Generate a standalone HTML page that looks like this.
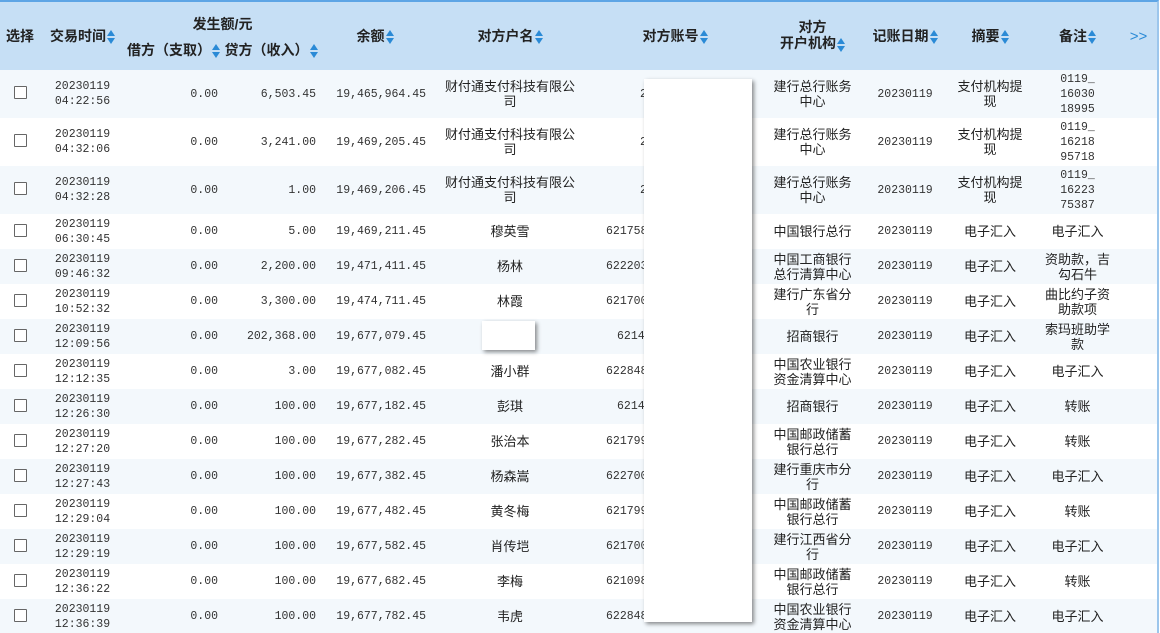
<!DOCTYPE html>
<html><head><meta charset="utf-8">
<style>
html,body{margin:0;padding:0;width:1160px;height:633px;overflow:hidden;background:#fff;}
body{font-family:"Liberation Sans","Noto Sans CJK SC",sans-serif;color:#222;position:relative;}
.wrap{position:absolute;left:0;top:0;width:1159px;height:633px;border-right:2px solid #9cc6ec;border-top:2px solid #5ea5e5;box-sizing:border-box;overflow:hidden;}
table{border-collapse:collapse;table-layout:fixed;width:1157px;}
td,th{padding:0;text-align:center;vertical-align:middle;overflow:hidden;white-space:nowrap;}
thead th{background:#c6dff5;font-weight:bold;font-size:14px;color:#222;}
.s{display:inline-block;width:8px;height:16px;vertical-align:middle;position:relative;margin-left:1px;}
.s:before{content:"";position:absolute;left:0;top:1px;border-left:4px solid transparent;border-right:4px solid transparent;border-bottom:6px solid #2a8ad6;}
.s:after{content:"";position:absolute;left:0;top:9px;border-left:4px solid transparent;border-right:4px solid transparent;border-top:6px solid #2a8ad6;}
tbody td{font-size:13px;line-height:15px;}
.n{font-family:"Liberation Mono","Noto Serif CJK SC",monospace;font-size:11.5px;color:#333;}
.r{text-align:right;padding-right:4px;}
.l{text-align:left;padding-left:16px;}
tbody tr:nth-child(odd) td{background:#f3f8fc;}
tr.t td{height:48px;}
tr.u td{height:35px;}
.cb{display:inline-block;width:11px;height:11px;border:1px solid #666;background:#fff;border-radius:1px;}
.box{position:absolute;background:#fff;box-shadow:2px 2px 4px rgba(0,0,0,.45);}
</style></head><body>
<div class="wrap">
<table>
<colgroup>
<col style="width:40px"><col style="width:85px"><col style="width:97px"><col style="width:98px"><col style="width:110px"><col style="width:160px"><col style="width:170px"><col style="width:105px"><col style="width:80px"><col style="width:90px"><col style="width:85px"><col style="width:37px">
</colgroup>
<thead>
<tr style="height:34px"><th rowspan="2" style="height:68px">选择</th><th rowspan="2">交易时间<span class="s"></span></th><th colspan="2" style="vertical-align:bottom;padding-bottom:2px">发生额/元</th><th rowspan="2">余额<span class="s"></span></th><th rowspan="2">对方户名<span class="s"></span></th><th rowspan="2">对方账号<span class="s"></span></th><th rowspan="2" style="line-height:16px">对方<br>开户机构<span class="s"></span></th><th rowspan="2">记账日期<span class="s"></span></th><th rowspan="2">摘要<span class="s"></span></th><th rowspan="2">备注<span class="s"></span></th><th rowspan="2" style="color:#2a8ad6;font-weight:normal;font-size:15px">&gt;&gt;</th></tr>
<tr style="height:34px"><th style="vertical-align:top;padding-top:4px">借方（支取）<span class="s"></span></th><th style="vertical-align:top;padding-top:4px">贷方（收入）<span class="s"></span></th></tr>
</thead>
<tbody>
<tr class="t"><td><span class="cb"></span></td><td class="n">20230119<br>04:22:56</td><td class="n r">0.00</td><td class="n r">6,503.45</td><td class="n r">19,465,964.45</td><td>财付通支付科技有限公<br>司</td><td class="n l" style="padding-left:50px">2</td><td>建行总行账务<br>中心</td><td class="n">20230119</td><td>支付机构提<br>现</td><td class="n">0119_<br>16030<br>18995</td><td></td></tr>
<tr class="t"><td><span class="cb"></span></td><td class="n">20230119<br>04:32:06</td><td class="n r">0.00</td><td class="n r">3,241.00</td><td class="n r">19,469,205.45</td><td>财付通支付科技有限公<br>司</td><td class="n l" style="padding-left:50px">2</td><td>建行总行账务<br>中心</td><td class="n">20230119</td><td>支付机构提<br>现</td><td class="n">0119_<br>16218<br>95718</td><td></td></tr>
<tr class="t"><td><span class="cb"></span></td><td class="n">20230119<br>04:32:28</td><td class="n r">0.00</td><td class="n r">1.00</td><td class="n r">19,469,206.45</td><td>财付通支付科技有限公<br>司</td><td class="n l" style="padding-left:50px">2</td><td>建行总行账务<br>中心</td><td class="n">20230119</td><td>支付机构提<br>现</td><td class="n">0119_<br>16223<br>75387</td><td></td></tr>
<tr class="u"><td><span class="cb"></span></td><td class="n">20230119<br>06:30:45</td><td class="n r">0.00</td><td class="n r">5.00</td><td class="n r">19,469,211.45</td><td>穆英雪</td><td class="n l">621758</td><td>中国银行总行</td><td class="n">20230119</td><td>电子汇入</td><td>电子汇入</td><td></td></tr>
<tr class="u"><td><span class="cb"></span></td><td class="n">20230119<br>09:46:32</td><td class="n r">0.00</td><td class="n r">2,200.00</td><td class="n r">19,471,411.45</td><td>杨林</td><td class="n l">622203</td><td>中国工商银行<br>总行清算中心</td><td class="n">20230119</td><td>电子汇入</td><td>资助款，吉<br>勾石牛</td><td></td></tr>
<tr class="u"><td><span class="cb"></span></td><td class="n">20230119<br>10:52:32</td><td class="n r">0.00</td><td class="n r">3,300.00</td><td class="n r">19,474,711.45</td><td>林霞</td><td class="n l">621700</td><td>建行广东省分<br>行</td><td class="n">20230119</td><td>电子汇入</td><td>曲比约子资<br>助款项</td><td></td></tr>
<tr class="u"><td><span class="cb"></span></td><td class="n">20230119<br>12:09:56</td><td class="n r">0.00</td><td class="n r">202,368.00</td><td class="n r">19,677,079.45</td><td></td><td class="n l" style="padding-left:27px">6214</td><td>招商银行</td><td class="n">20230119</td><td>电子汇入</td><td>索玛班助学<br>款</td><td></td></tr>
<tr class="u"><td><span class="cb"></span></td><td class="n">20230119<br>12:12:35</td><td class="n r">0.00</td><td class="n r">3.00</td><td class="n r">19,677,082.45</td><td>潘小群</td><td class="n l">622848</td><td>中国农业银行<br>资金清算中心</td><td class="n">20230119</td><td>电子汇入</td><td>电子汇入</td><td></td></tr>
<tr class="u"><td><span class="cb"></span></td><td class="n">20230119<br>12:26:30</td><td class="n r">0.00</td><td class="n r">100.00</td><td class="n r">19,677,182.45</td><td>彭琪</td><td class="n l" style="padding-left:27px">6214</td><td>招商银行</td><td class="n">20230119</td><td>电子汇入</td><td>转账</td><td></td></tr>
<tr class="u"><td><span class="cb"></span></td><td class="n">20230119<br>12:27:20</td><td class="n r">0.00</td><td class="n r">100.00</td><td class="n r">19,677,282.45</td><td>张治本</td><td class="n l">621799</td><td>中国邮政储蓄<br>银行总行</td><td class="n">20230119</td><td>电子汇入</td><td>转账</td><td></td></tr>
<tr class="u"><td><span class="cb"></span></td><td class="n">20230119<br>12:27:43</td><td class="n r">0.00</td><td class="n r">100.00</td><td class="n r">19,677,382.45</td><td>杨森嵩</td><td class="n l">622700</td><td>建行重庆市分<br>行</td><td class="n">20230119</td><td>电子汇入</td><td>电子汇入</td><td></td></tr>
<tr class="u"><td><span class="cb"></span></td><td class="n">20230119<br>12:29:04</td><td class="n r">0.00</td><td class="n r">100.00</td><td class="n r">19,677,482.45</td><td>黄冬梅</td><td class="n l">621799</td><td>中国邮政储蓄<br>银行总行</td><td class="n">20230119</td><td>电子汇入</td><td>转账</td><td></td></tr>
<tr class="u"><td><span class="cb"></span></td><td class="n">20230119<br>12:29:19</td><td class="n r">0.00</td><td class="n r">100.00</td><td class="n r">19,677,582.45</td><td>肖传垲</td><td class="n l">621700</td><td>建行江西省分<br>行</td><td class="n">20230119</td><td>电子汇入</td><td>电子汇入</td><td></td></tr>
<tr class="u"><td><span class="cb"></span></td><td class="n">20230119<br>12:36:22</td><td class="n r">0.00</td><td class="n r">100.00</td><td class="n r">19,677,682.45</td><td>李梅</td><td class="n l">621098</td><td>中国邮政储蓄<br>银行总行</td><td class="n">20230119</td><td>电子汇入</td><td>转账</td><td></td></tr>
<tr class="u"><td><span class="cb"></span></td><td class="n">20230119<br>12:36:39</td><td class="n r">0.00</td><td class="n r">100.00</td><td class="n r">19,677,782.45</td><td>韦虎</td><td class="n l">622848</td><td>中国农业银行<br>资金清算中心</td><td class="n">20230119</td><td>电子汇入</td><td>电子汇入</td><td></td></tr>
</tbody>
</table>
</div>
<div class="box" style="left:644px;top:79px;width:108px;height:543px"></div>
<div class="box" style="left:482px;top:321px;width:53px;height:29px"></div>
</body></html>
